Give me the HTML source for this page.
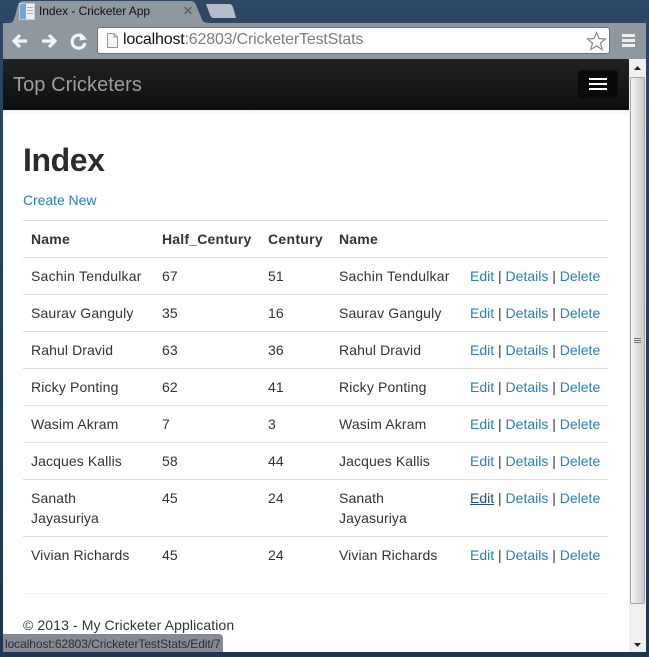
<!DOCTYPE html>
<html><head><meta charset="utf-8"><title>Index - Cricketer App</title>
<style>
html,body{margin:0;padding:0;background:#2c4463;}
body{width:649px;height:657px;position:relative;overflow:hidden;font-family:"Liberation Sans",sans-serif;font-size:14px;color:#333;}
div,a,span,svg{position:absolute;white-space:nowrap;}
.t{line-height:20px;height:20px;letter-spacing:.1px;}
.w{letter-spacing:.15px;}
.k{letter-spacing:0;}
.l{color:#2a7fb8;}
.k span{position:static;color:#2a7fb8;}
.h{font-weight:bold;color:#333;letter-spacing:.2px;}
.r{left:23px;width:585px;height:1px;background:#ddd;}
</style></head><body>
<div style="left:0;top:0;width:649px;height:657px;background:linear-gradient(#2f4866,#2c4463 70px,#1f3550);"></div>
<!-- tab -->
<svg style="left:0;top:0" width="649" height="60">
<path d="M3 23 L9 23 C13 23 14 20 15 16 L18 5 C19 2 21 1 24 1 L190 1 C193 1 195 2 196 5 L201 17 C202 21 204 23 209 23 L646 23 L646 59 L3 59Z" fill="#8f979f"/>
<path d="M206 4 L229 4 C231 4 232 5 233 7 L236 18 L214 18 C212 18 211 17 210 15 L206 4Z" fill="#b4bcc6"/>
</svg>
<svg style="left:19px;top:3px" width="17" height="18"><rect x="0.5" y="0.5" width="15" height="16" fill="#eef1f4" stroke="#c5ccd3"/><rect x="1" y="1" width="6" height="15" fill="#6fa6d6"/><rect x="8" y="4" width="6" height="1" fill="#aab"/><rect x="8" y="7" width="6" height="1" fill="#aab"/><rect x="8" y="10" width="6" height="1" fill="#aab"/></svg>
<div style="left:39px;top:2px;height:18px;line-height:18px;font-size:12px;color:#111;letter-spacing:-.05px;">Index - Cricketer App</div>
<div style="left:183px;top:1px;height:20px;line-height:20px;font-size:17px;color:#555;">×</div>
<!-- nav buttons -->
<svg style="left:10px;top:30px" width="80" height="22" fill="none" stroke="#f4f5f6" stroke-width="3.2">
<path d="M17 11 H4 M10 5 L4 11 L10 17"/>
<path d="M32 11 H45 M39 5 L45 11 L39 17"/>
<path d="M74 8 A6.5 6.5 0 1 0 75 13"/>
<path d="M71 4 L76 9 L70 10Z" fill="#f4f5f6" stroke-width="1"/>
</svg>
<!-- url -->
<div style="left:97px;top:27px;width:511px;height:25px;background:#fff;border:1px solid #6d7479;border-radius:3px;"></div>
<svg style="left:105px;top:33px" width="14" height="16" fill="#f5f5f5" stroke="#999"><path d="M2.5 .5 H9 L12.5 4 V14.5 H2.5Z"/><path d="M9 .5 V4 H12.5" fill="none"/></svg>
<div style="left:123px;top:29px;height:22px;line-height:22px;font-size:16px;color:#7d7d7d;letter-spacing:-.18px;"><span style="position:static;color:#111">localhost</span>:62803/CricketerTestStats</div>
<svg style="left:586px;top:31px" width="21" height="20"><path d="M10.5 1.5 L13 7.5 L19.5 8 L14.5 12 L16.2 18.5 L10.5 15 L4.8 18.5 L6.5 12 L1.5 8 L8 7.5Z" fill="#fff" stroke="#8a8a8a" stroke-width="1.2"/></svg>
<div style="left:622px;top:34px;width:13px;height:3px;background:#eef0f2;"></div>
<div style="left:622px;top:39px;width:13px;height:3px;background:#eef0f2;"></div>
<div style="left:622px;top:44px;width:13px;height:3px;background:#eef0f2;"></div>
<!-- page -->
<div style="left:3px;top:59px;width:626px;height:593px;background:#fff;"></div>
<div style="left:3px;top:59px;width:626px;height:51px;background:linear-gradient(#222,#0e0e0e);"></div>
<div style="left:3px;top:110px;width:626px;height:6px;background:linear-gradient(#f2f2f2,#fff);"></div>
<div style="left:13px;top:75px;height:20px;line-height:20px;font-size:20px;color:#9d9d9d;letter-spacing:.08px;">Top Cricketers</div>
<div style="left:578px;top:70px;width:40px;height:28px;background:#0a0a0a;border-radius:3px;"></div>
<div style="left:589px;top:78px;width:18px;height:2px;background:#fff;"></div>
<div style="left:589px;top:83px;width:18px;height:2px;background:#fff;"></div>
<div style="left:589px;top:88px;width:18px;height:2px;background:#fff;"></div>
<!-- scrollbar -->
<div style="left:629px;top:59px;width:17px;height:593px;background:#f0f0f0;"></div>
<svg style="left:629px;top:59px" width="17" height="593"><path d="M5 11 L8.5 7 L12 11Z" fill="#222"/><path d="M5 584 L8.5 588 L12 584Z" fill="#222"/></svg>
<div style="left:630px;top:77px;height:527px;background:linear-gradient(90deg,#f4f4f4,#dcdcde 60%,#cacace);border:1px solid #a4a4a8;border-radius:2px;box-sizing:border-box;width:15px;"></div>
<div style="left:634px;top:338px;width:7px;height:1px;background:#777;"></div>
<div style="left:634px;top:340px;width:7px;height:1px;background:#777;"></div>
<div style="left:634px;top:342px;width:7px;height:1px;background:#777;"></div>
<!-- content -->
<div style="left:23px;top:140px;height:40px;line-height:40px;font-size:32px;font-weight:bold;color:#2b2b2b;letter-spacing:-.4px;">Index</div>
<a class="t l" style="left:23px;top:190px;letter-spacing:-.05px">Create New</a>
<div class="r" style="top:220px"></div>
<div class="r" style="top:257px"></div>
<div class="r" style="top:294px"></div>
<div class="r" style="top:331px"></div>
<div class="r" style="top:368px"></div>
<div class="r" style="top:405px"></div>
<div class="r" style="top:442px"></div>
<div class="r" style="top:479px"></div>
<div class="r" style="top:536px"></div>
<div class="r" style="top:593px;background:#eee"></div>
<div class="t h" style="left:31px;top:229px">Name</div>
<div class="t h" style="left:162px;top:229px">Half_Century</div>
<div class="t h" style="left:268px;top:229px;letter-spacing:.3px">Century</div>
<div class="t h" style="left:339px;top:229px">Name</div>

<div class="t" style="left:31px;top:266px;letter-spacing:.22px">Sachin Tendulkar</div><div class="t" style="left:162px;top:266px">67</div><div class="t" style="left:268px;top:266px">51</div><div class="t" style="left:339px;top:266px;letter-spacing:.22px">Sachin Tendulkar</div>
<div class="t k" style="left:470px;top:266px"><span>Edit</span> | <span>Details</span> | <span>Delete</span></div>

<div class="t w" style="left:31px;top:303px">Saurav Ganguly</div><div class="t" style="left:162px;top:303px">35</div><div class="t" style="left:268px;top:303px">16</div><div class="t w" style="left:339px;top:303px">Saurav Ganguly</div>
<div class="t k" style="left:470px;top:303px"><span>Edit</span> | <span>Details</span> | <span>Delete</span></div>

<div class="t" style="left:31px;top:340px">Rahul Dravid</div><div class="t" style="left:162px;top:340px">63</div><div class="t" style="left:268px;top:340px">36</div><div class="t" style="left:339px;top:340px">Rahul Dravid</div>
<div class="t k" style="left:470px;top:340px"><span>Edit</span> | <span>Details</span> | <span>Delete</span></div>

<div class="t w" style="left:31px;top:377px">Ricky Ponting</div><div class="t" style="left:162px;top:377px">62</div><div class="t" style="left:268px;top:377px">41</div><div class="t w" style="left:339px;top:377px">Ricky Ponting</div>
<div class="t k" style="left:470px;top:377px"><span>Edit</span> | <span>Details</span> | <span>Delete</span></div>

<div class="t w" style="left:31px;top:414px">Wasim Akram</div><div class="t" style="left:162px;top:414px">7</div><div class="t" style="left:268px;top:414px">3</div><div class="t w" style="left:339px;top:414px">Wasim Akram</div>
<div class="t k" style="left:470px;top:414px"><span>Edit</span> | <span>Details</span> | <span>Delete</span></div>

<div class="t" style="left:31px;top:451px">Jacques Kallis</div><div class="t" style="left:162px;top:451px">58</div><div class="t" style="left:268px;top:451px">44</div><div class="t" style="left:339px;top:451px">Jacques Kallis</div>
<div class="t k" style="left:470px;top:451px"><span>Edit</span> | <span>Details</span> | <span>Delete</span></div>

<div class="t" style="left:31px;top:488px">Sanath</div><div class="t" style="left:31px;top:508px">Jayasuriya</div><div class="t" style="left:162px;top:488px">45</div><div class="t" style="left:268px;top:488px">24</div><div class="t" style="left:339px;top:488px">Sanath</div><div class="t" style="left:339px;top:508px">Jayasuriya</div>
<div class="t k" style="left:470px;top:488px"><span style="color:#23527c;text-decoration:underline">Edit</span> | <span>Details</span> | <span>Delete</span></div>

<div class="t" style="left:31px;top:545px">Vivian Richards</div><div class="t" style="left:162px;top:545px">45</div><div class="t" style="left:268px;top:545px">24</div><div class="t" style="left:339px;top:545px">Vivian Richards</div>
<div class="t k" style="left:470px;top:545px"><span>Edit</span> | <span>Details</span> | <span>Delete</span></div>

<div class="t" style="left:23px;top:615px">© 2013 - My Cricketer Application</div>
<!-- status -->
<div style="left:3px;top:634px;width:220px;height:18px;background:#868b93;border-radius:0 4px 0 0;"></div>
<div style="left:5px;top:636px;height:17px;line-height:17px;font-size:12px;color:#2a2f36;letter-spacing:-.08px;">localhost:62803/CricketerTestStats/Edit/7</div>
</body></html>
